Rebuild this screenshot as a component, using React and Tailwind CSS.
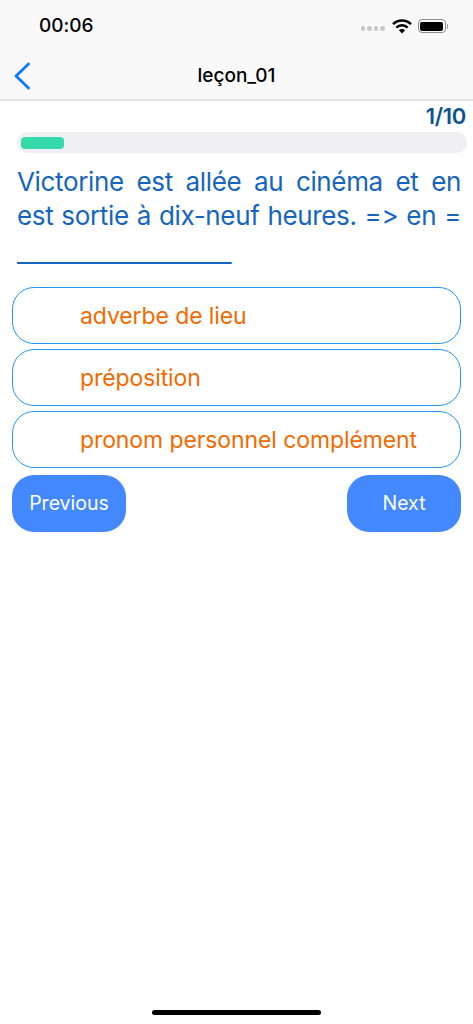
import React from 'react';

const options = ['adverbe de lieu', 'préposition', 'pronom personnel complément'];

function StatusIcons() {
    return (
        <div className="flex items-center">
            <div className="flex gap-[2px] mt-[5px] mr-[7px]">
                <span className="w-[4.5px] h-[4.5px] rounded-full bg-[#c8c8c8]" />
                <span className="w-[4.5px] h-[4.5px] rounded-full bg-[#c8c8c8]" />
                <span className="w-[4.5px] h-[4.5px] rounded-full bg-[#c8c8c8]" />
                <span className="w-[4.5px] h-[4.5px] rounded-full bg-[#c8c8c8]" />
            </div>
            <svg width="20" height="15" viewBox="0 0 20 15" className="mr-[6px]">
                <path d="M1 5.2a12.8 12.8 0 0 1 18 0" fill="none" stroke="#000" strokeWidth="2.4" />
                <path d="M4.3 8.6a8.2 8.2 0 0 1 11.4 0" fill="none" stroke="#000" strokeWidth="2.4" />
                <path d="M10 14.5 6.9 11.3a4.4 4.4 0 0 1 6.2 0z" fill="#000" />
            </svg>
            <div className="w-[28px] h-[14px] rounded-[4px] border border-[#8e8e8e] p-[1.5px]">
                <div className="w-full h-full rounded-[2px] bg-black" />
            </div>
            <div className="w-[1.5px] h-[5px] ml-[1px] rounded-r-full bg-[#9a9a9a]" />
        </div>
    );
}

export default function App() {
    return (
        <div className="relative w-full h-[1024px] bg-white overflow-hidden font-['Inter',sans-serif] [font-variant-ligatures:none] [font-feature-settings:'calt'_0]">
            {/* Status bar + nav */}
            <div className="h-[101px] bg-[#f9f9f9] border-b-2 border-[#e4e4e4]">
                <div className="h-[50px] flex items-center justify-between pl-[39px] pr-[25px] pt-[2px]">
                    <span className="text-[19px] font-medium text-black">00:06</span>
                    <StatusIcons />
                </div>
                <div className="relative h-[49px] flex items-center justify-center pt-[3px]">
                    <svg width="18" height="28" viewBox="0 0 18 28" className="absolute left-[13px] top-[12px]">
                        <path d="M15.5 2 3 14l12.5 12" fill="none" stroke="#0a7aff" strokeWidth="2.8" strokeLinecap="round" strokeLinejoin="round" />
                    </svg>
                    <span className="text-[19px] font-medium text-black">leçon_01</span>
                </div>
            </div>

            {/* Progress */}
            <div className="h-[31px] flex items-center justify-end pr-[7px] pb-[2px]">
                <span className="text-[22px] font-semibold leading-none text-[#0b5394] tracking-[-0.3px]">1/10</span>
            </div>
            <div className="ml-[17px] mr-[6px] h-[21px] rounded-full bg-[#efeff4] flex items-center px-[4px]">
                <div className="w-[43px] h-[12px] rounded-[4px] bg-[#34dba9]" />
            </div>

            {/* Question */}
            <p className="mt-[12px] ml-[17px] mr-[12px] text-[26px] leading-[34px] tracking-[-0.35px] text-[#1565c0] text-justify">
                Victorine est allée au cinéma et en est sortie à dix-neuf heures. =&gt; en = <span className="align-[-3px] tracking-[-0.6px]">___________________</span>
            </p>

            {/* Options */}
            <div className="mt-[17px] mx-[12px] flex flex-col gap-[5px]">
                {options.map((option) => (
                    <div key={option} className="h-[57px] flex items-center pl-[67px] pt-[1px] rounded-[22px] border border-[#2196f3] text-[23px] tracking-[-0.1px] text-[#f26a00]">
                        {option}
                    </div>
                ))}
            </div>

            {/* Buttons */}
            <div className="mt-[7px] mx-[12px] flex justify-between">
                <button className="w-[114px] h-[57px] pt-[1px] rounded-[22px] bg-[#4488ff] text-white text-[19.5px]">Previous</button>
                <button className="w-[114px] h-[57px] pt-[1px] rounded-[22px] bg-[#4488ff] text-white text-[19.5px]">Next</button>
            </div>

            {/* Home indicator */}
            <div className="absolute left-[152px] bottom-[9px] w-[169px] h-[5px] rounded-full bg-black" />
        </div>
    );
}
